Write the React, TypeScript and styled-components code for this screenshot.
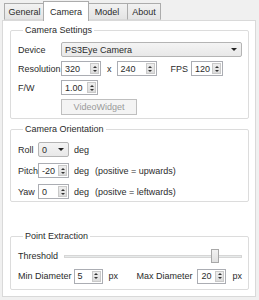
import React from 'react';
import styled, { createGlobalStyle } from 'styled-components';

const Global = createGlobalStyle`
  html, body { margin: 0; padding: 0; background: #f0f0f0; }
  body { font-family: "Liberation Sans", Arial, sans-serif; font-size: 9px; color: #2b2b2b; }
  * { box-sizing: border-box; }
`;

const Window = styled.div`
  width: 259px;
  height: 300px;
  padding: 1px 3px 3px 2px;
  display: flex;
  flex-direction: column;
`;

const TabBar = styled.div`
  display: flex;
  align-items: flex-end;
  height: 19px;
  padding-left: 2px;
  position: relative;
  z-index: 1;
`;

const Tab = styled.div<{ $active?: boolean; $w: number }>`
  width: ${p => p.$w}px;
  height: ${p => (p.$active ? 20 : 17)}px;
  margin: 0 ${p => (p.$active ? -2 : 0)}px ${p => (p.$active ? -1 : 0)}px;
  margin-left: ${p => (p.$active ? -2 : -1)}px;
  border: 1px solid #acacac;
  border-bottom: ${p => (p.$active ? 'none' : '1px solid #d9d9d9')};
  background: ${p => (p.$active ? '#fff' : 'linear-gradient(#f2f2f2, #e4e4e4)')};
  position: relative;
  z-index: ${p => (p.$active ? 2 : 1)};
  display: flex;
  align-items: center;
  justify-content: center;
  padding-top: ${p => (p.$active ? 0 : 1)}px;
  &:first-child { margin-left: 0; }
`;

const Pane = styled.div`
  flex: 1;
  border: 1px solid #d9d9d9;
  background: #fff;
  padding: 4px 6px 6px 7px;
  display: flex;
  flex-direction: column;
`;

const Group = styled.fieldset<{ $h: number; $mt?: number }>`
  margin: ${p => p.$mt ?? 0}px 0 0;
  height: ${p => p.$h}px;
  border: 1px solid #dcdcdc;
  border-radius: 2px;
  padding: 4px 6px 0 7px;
  display: flex;
  flex-direction: column;
`;

const Legend = styled.legend`
  padding: 0 2px;
  margin-left: 5px;
  line-height: 11px;
`;

const Row = styled.div<{ $h?: number }>`
  display: flex;
  align-items: center;
  height: ${p => p.$h ?? 20}px;
`;

const Label = styled.span<{ $w?: number }>`
  width: ${p => (p.$w ? `${p.$w}px` : 'auto')};
  flex: none;
  white-space: pre;
`;

const Text = styled.span<{ $ml?: number }>`
  margin-left: ${p => p.$ml ?? 0}px;
  white-space: pre;
`;

const Spacer = styled.div`
  flex: 1;
`;

const Combo = styled.div<{ $w?: number }>`
  width: ${p => (p.$w ? `${p.$w}px` : 'auto')};
  flex: ${p => (p.$w ? 'none' : '1')};
  height: 15px;
  border: 1px solid #b4b4b4;
  border-radius: 2px;
  background: linear-gradient(#f4f4f4, #e8e8e8);
  display: flex;
  align-items: center;
  padding-left: 3px;
  justify-content: space-between;
`;

const ComboArrow = styled.span`
  width: 0;
  height: 0;
  margin-right: 4px;
  border-left: 3px solid transparent;
  border-right: 3px solid transparent;
  border-top: 3px solid #222;
`;

const SpinBox = styled.div<{ $w: number; $ml?: number }>`
  width: ${p => p.$w}px;
  margin-left: ${p => p.$ml ?? 0}px;
  height: 15px;
  border: 1px solid #abadb3;
  background: #fff;
  display: flex;
  align-items: stretch;
  flex: none;
`;

const SpinValue = styled.span`
  flex: 1;
  display: flex;
  align-items: center;
  padding-left: 3px;
`;

const SpinButtons = styled.span`
  width: 9px;
  margin: 1px 1px 1px 0;
  background: linear-gradient(#eeeeee, #dcdcdc);
  border: 1px solid #c9c9c9;
  display: flex;
  flex-direction: column;
  align-items: center;
  justify-content: center;
  gap: 2px;
`;

const TriUp = styled.span`
  width: 0; height: 0;
  border-left: 2px solid transparent;
  border-right: 2px solid transparent;
  border-bottom: 2px solid #333;
`;

const TriDown = styled.span`
  width: 0; height: 0;
  border-left: 2px solid transparent;
  border-right: 2px solid transparent;
  border-top: 2px solid #333;
`;

const Button = styled.div`
  width: 76px;
  height: 16px;
  border: 1px solid #bfbfbf;
  background: #f4f4f4;
  color: #9a9a9a;
  display: flex;
  align-items: center;
  justify-content: center;
`;

const Slider = styled.div`
  flex: 1;
  height: 16px;
  position: relative;
  display: flex;
  align-items: center;
  margin-left: 6px;
`;

const Groove = styled.div`
  flex: 1;
  height: 3px;
  border: 1px solid #d6d6d6;
  background: #e7eaea;
`;

const Handle = styled.div`
  position: absolute;
  top: 1px;
  width: 8px;
  height: 14px;
  border: 1px solid #a8a8a8;
  background: linear-gradient(#f2f2f2, #e0e0e0);
`;

const Fill = styled.div`
  flex: 1;
`;

const Spin = ({ w, v, ml }: { w: number; v: string; ml?: number }) => (
  <SpinBox $w={w} $ml={ml}>
    <SpinValue>{v}</SpinValue>
    <SpinButtons>
      <TriUp />
      <TriDown />
    </SpinButtons>
  </SpinBox>
);

export default function App() {
  return (
    <>
      <Global />
      <Window>
        <TabBar>
          <Tab $w={41}>General</Tab>
          <Tab $w={46} $active>Camera</Tab>
          <Tab $w={42}>Model</Tab>
          <Tab $w={34}>About</Tab>
        </TabBar>
        <Pane>
          <Group $h={94}>
            <Legend>Camera Settings</Legend>
            <Row $h={19}>
              <Label $w={43}>Device</Label>
              <Combo>
                PS3Eye Camera
                <ComboArrow />
              </Combo>
            </Row>
            <Row $h={19}>
              <Label $w={43}>Resolution</Label>
              <Spin w={40} v="320" />
              <Text $ml={6}>x</Text>
              <Spin w={40} v="240" ml={5} />
              <Text $ml={14}>FPS</Text>
              <Spin w={32} v="120" ml={3} />
              <Spacer />
            </Row>
            <Row $h={19}>
              <Label $w={43}>F/W</Label>
              <Spin w={37} v="1.00" />
            </Row>
            <Row $h={19}>
              <Label $w={43} />
              <Button>VideoWidget</Button>
            </Row>
          </Group>
          <Group $h={78} $mt={5}>
            <Legend>Camera Orientation</Legend>
            <Row $h={21}>
              <Label $w={20}>Roll</Label>
              <Combo $w={31}>
                0
                <ComboArrow />
              </Combo>
              <Text $ml={5}>deg</Text>
            </Row>
            <Row $h={21}>
              <Label $w={20}>Pitch</Label>
              <Spin w={31} v="-20" />
              <Text $ml={5}>deg</Text>
              <Text $ml={6}>(positive = upwards)</Text>
            </Row>
            <Row $h={21}>
              <Label $w={20}>Yaw</Label>
              <Spin w={31} v="0" />
              <Text $ml={5}>deg</Text>
              <Text $ml={6}>(positve = leftwards)</Text>
            </Row>
          </Group>
          <Fill />
          <Group $h={59}>
            <Legend>Point Extraction</Legend>
            <Row $h={20}>
              <Label>Threshold</Label>
              <Slider>
                <Groove />
                <Handle style={{ left: `${(157 / 190) * 100}%` }} />
              </Slider>
            </Row>
            <Row $h={20}>
              <Label>Min Diameter</Label>
              <Spin w={29} v="5" ml={2} />
              <Text $ml={6}>px</Text>
              <Spacer />
              <Label>Max Diameter</Label>
              <Spin w={29} v="20" ml={5} />
              <Text $ml={6}>px</Text>
            </Row>
          </Group>
        </Pane>
      </Window>
    </>
  );
}
